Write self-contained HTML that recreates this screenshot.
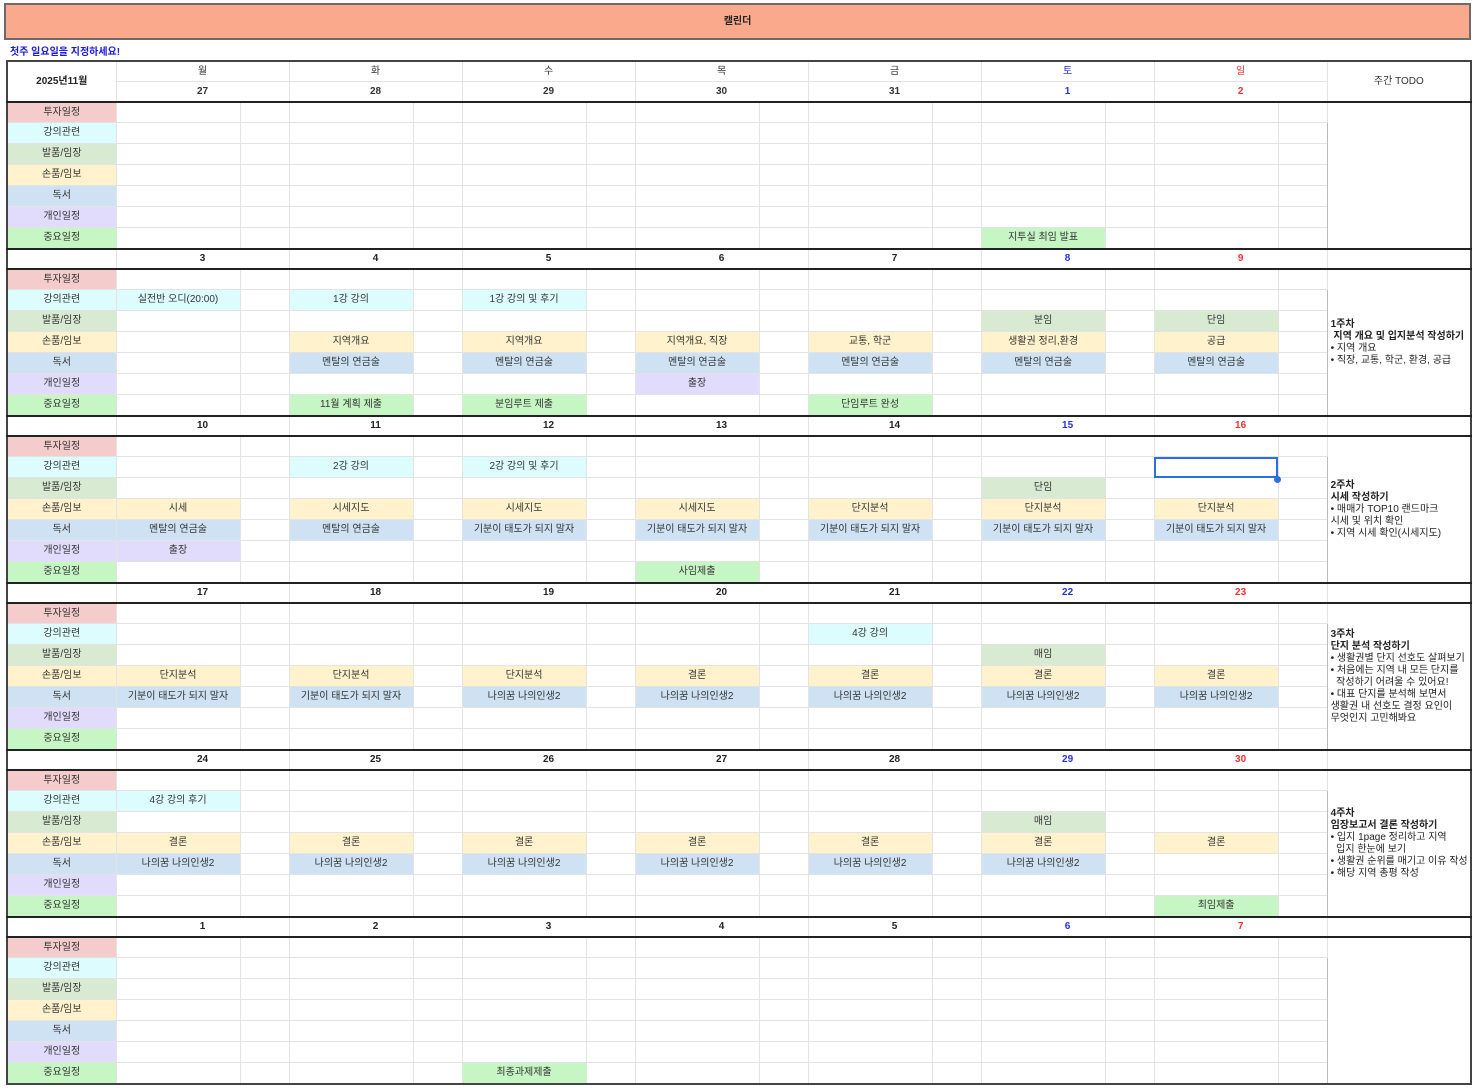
<!DOCTYPE html>
<html><head><meta charset="utf-8">
<style>
body{margin:0;background:#fff;width:1473px;height:1090px;position:relative;overflow:hidden;font-family:"Liberation Sans","Noto Sans CJK KR",sans-serif;}
.title{position:absolute;left:4px;top:3px;width:1463px;height:33px;background:#fba98c;border:2px solid #6b6b6b;font-size:10px;font-weight:bold;text-align:center;line-height:33px;color:#222}
.note{position:absolute;left:10px;top:43px;font-size:10px;font-weight:bold;color:#1a1adf}
table{position:absolute;left:6px;top:60px;border-collapse:collapse;table-layout:fixed;width:1464px;font-size:10px;color:#333;border:2px solid #444}
td{border:1px solid #e3e3e3;padding:0;text-align:center;white-space:nowrap;overflow:hidden;height:20px;line-height:12px}
tr.h td{height:19px}
tr.w td{border-top:2px solid #222;font-weight:bold;color:#222;height:18px}
tr.fr td{border-top:2px solid #222;height:19px}
td.todo{border-left:1px solid #bbb;text-align:left;vertical-align:middle;padding-left:3px;white-space:normal;font-size:10px;line-height:12px;color:#222;background:#fff}
td.todo b{font-weight:bold}
tr td.sa{color:#2233dd}tr td.su{color:#f03030}
.a{background:#f4cccc}.b{background:#dcfcfd}.c{background:#d9ead3}.d{background:#fff2cc}.e{background:#cfe2f3}.f{background:#e1dcfc}.g{background:#c6f6c4}
.sel{position:relative;outline:2px solid #2b6fe0;outline-offset:-2px}
.dot{position:absolute;left:1274px;top:476px;width:7px;height:7px;border-radius:50%;background:#2b6fe0}
</style></head><body>
<div class="title">캘린더</div>
<div class="note">첫주 일요일을 지정하세요!</div>
<table>
<colgroup><col style="width:109px"><col style="width:124px"><col style="width:49px"><col style="width:124px"><col style="width:49px"><col style="width:124px"><col style="width:49px"><col style="width:124px"><col style="width:49px"><col style="width:124px"><col style="width:49px"><col style="width:124px"><col style="width:49px"><col style="width:124px"><col style="width:49px"><col style="width:144px"></colgroup>
<tr class="h"><td rowspan="2" style="font-weight:bold;color:#222">2025년11월</td><td colspan="2">월</td><td colspan="2">화</td><td colspan="2">수</td><td colspan="2">목</td><td colspan="2">금</td><td colspan="2" class="sa">토</td><td colspan="2" class="su">일</td><td rowspan="2">주간 TODO</td></tr>
<tr class="h" style="font-weight:bold"><td colspan="2"><b>27</b></td><td colspan="2"><b>28</b></td><td colspan="2"><b>29</b></td><td colspan="2"><b>30</b></td><td colspan="2"><b>31</b></td><td colspan="2" class="sa"><b>1</b></td><td colspan="2" class="su"><b>2</b></td></tr>
<!-- week1 -->
<tr class="fr"><td class="a">투자일정</td><td></td><td></td><td></td><td></td><td></td><td></td><td></td><td></td><td></td><td></td><td></td><td></td><td></td><td></td><td class="todo" rowspan="7"></td></tr>
<tr><td class="b">강의관련</td><td></td><td></td><td></td><td></td><td></td><td></td><td></td><td></td><td></td><td></td><td></td><td></td><td></td><td></td></tr>
<tr><td class="c">발품/임장</td><td></td><td></td><td></td><td></td><td></td><td></td><td></td><td></td><td></td><td></td><td></td><td></td><td></td><td></td></tr>
<tr><td class="d">손품/임보</td><td></td><td></td><td></td><td></td><td></td><td></td><td></td><td></td><td></td><td></td><td></td><td></td><td></td><td></td></tr>
<tr><td class="e">독서</td><td></td><td></td><td></td><td></td><td></td><td></td><td></td><td></td><td></td><td></td><td></td><td></td><td></td><td></td></tr>
<tr><td class="f">개인일정</td><td></td><td></td><td></td><td></td><td></td><td></td><td></td><td></td><td></td><td></td><td></td><td></td><td></td><td></td></tr>
<tr><td class="g">중요일정</td><td></td><td></td><td></td><td></td><td></td><td></td><td></td><td></td><td></td><td></td><td class="g">지투실 최임 발표</td><td></td><td></td><td></td></tr>
<!-- week2 -->
<tr class="w"><td></td><td colspan="2">3</td><td colspan="2">4</td><td colspan="2">5</td><td colspan="2">6</td><td colspan="2">7</td><td colspan="2" class="sa">8</td><td colspan="2" class="su">9</td><td></td></tr>
<tr class="fr"><td class="a">투자일정</td><td></td><td></td><td></td><td></td><td></td><td></td><td></td><td></td><td></td><td></td><td></td><td></td><td></td><td></td><td class="todo" rowspan="7"><b>1주차<br>&nbsp;지역 개요 및 입지분석 작성하기</b><br>• 지역 개요<br>• 직장, 교통, 학군, 환경, 공급</td></tr>
<tr><td class="b">강의관련</td><td class="b">실전반 오디(20:00)</td><td></td><td class="b">1강 강의</td><td></td><td class="b">1강 강의 및 후기</td><td></td><td></td><td></td><td></td><td></td><td></td><td></td><td></td><td></td></tr>
<tr><td class="c">발품/임장</td><td></td><td></td><td></td><td></td><td></td><td></td><td></td><td></td><td></td><td></td><td class="c">분임</td><td></td><td class="c">단임</td><td></td></tr>
<tr><td class="d">손품/임보</td><td></td><td></td><td class="d">지역개요</td><td></td><td class="d">지역개요</td><td></td><td class="d">지역개요, 직장</td><td></td><td class="d">교통, 학군</td><td></td><td class="d">생활권 정리,환경</td><td></td><td class="d">공급</td><td></td></tr>
<tr><td class="e">독서</td><td></td><td></td><td class="e">멘탈의 연금술</td><td></td><td class="e">멘탈의 연금술</td><td></td><td class="e">멘탈의 연금술</td><td></td><td class="e">멘탈의 연금술</td><td></td><td class="e">멘탈의 연금술</td><td></td><td class="e">멘탈의 연금술</td><td></td></tr>
<tr><td class="f">개인일정</td><td></td><td></td><td></td><td></td><td></td><td></td><td class="f">출장</td><td></td><td></td><td></td><td></td><td></td><td></td><td></td></tr>
<tr><td class="g">중요일정</td><td></td><td></td><td class="g">11월 계획 제출</td><td></td><td class="g">분임루트 제출</td><td></td><td></td><td></td><td class="g">단임루트 완성</td><td></td><td></td><td></td><td></td><td></td></tr>
<!-- week3 -->
<tr class="w"><td></td><td colspan="2">10</td><td colspan="2">11</td><td colspan="2">12</td><td colspan="2">13</td><td colspan="2">14</td><td colspan="2" class="sa">15</td><td colspan="2" class="su">16</td><td></td></tr>
<tr class="fr"><td class="a">투자일정</td><td></td><td></td><td></td><td></td><td></td><td></td><td></td><td></td><td></td><td></td><td></td><td></td><td></td><td></td><td class="todo" rowspan="7"><b>2주차<br>시세 작성하기</b><br>• 매매가 TOP10 랜드마크<br>시세 및 위치 확인<br>• 지역 시세 확인(시세지도)</td></tr>
<tr><td class="b">강의관련</td><td></td><td></td><td class="b">2강 강의</td><td></td><td class="b">2강 강의 및 후기</td><td></td><td></td><td></td><td></td><td></td><td></td><td></td><td class="sel"></td><td></td></tr>
<tr><td class="c">발품/임장</td><td></td><td></td><td></td><td></td><td></td><td></td><td></td><td></td><td></td><td></td><td class="c">단임</td><td></td><td></td><td></td></tr>
<tr><td class="d">손품/임보</td><td class="d">시세</td><td></td><td class="d">시세지도</td><td></td><td class="d">시세지도</td><td></td><td class="d">시세지도</td><td></td><td class="d">단지분석</td><td></td><td class="d">단지분석</td><td></td><td class="d">단지분석</td><td></td></tr>
<tr><td class="e">독서</td><td class="e">멘탈의 연금술</td><td></td><td class="e">멘탈의 연금술</td><td></td><td class="e">기분이 태도가 되지 말자</td><td></td><td class="e">기분이 태도가 되지 말자</td><td></td><td class="e">기분이 태도가 되지 말자</td><td></td><td class="e">기분이 태도가 되지 말자</td><td></td><td class="e">기분이 태도가 되지 말자</td><td></td></tr>
<tr><td class="f">개인일정</td><td class="f">출장</td><td></td><td></td><td></td><td></td><td></td><td></td><td></td><td></td><td></td><td></td><td></td><td></td><td></td></tr>
<tr><td class="g">중요일정</td><td></td><td></td><td></td><td></td><td></td><td></td><td class="g">사임제출</td><td></td><td></td><td></td><td></td><td></td><td></td><td></td></tr>
<!-- week4 -->
<tr class="w"><td></td><td colspan="2">17</td><td colspan="2">18</td><td colspan="2">19</td><td colspan="2">20</td><td colspan="2">21</td><td colspan="2" class="sa">22</td><td colspan="2" class="su">23</td><td></td></tr>
<tr class="fr"><td class="a">투자일정</td><td></td><td></td><td></td><td></td><td></td><td></td><td></td><td></td><td></td><td></td><td></td><td></td><td></td><td></td><td class="todo" rowspan="7"><b>3주차<br>단지 분석 작성하기</b><br>• 생활권별 단지 선호도 살펴보기<br>• 처음에는 지역 내 모든 단지를<br>&nbsp; 작성하기 어려울 수 있어요!<br>• 대표 단지를 분석해 보면서<br>생활권 내 선호도 결정 요인이<br>무엇인지 고민해봐요</td></tr>
<tr><td class="b">강의관련</td><td></td><td></td><td></td><td></td><td></td><td></td><td></td><td></td><td class="b">4강 강의</td><td></td><td></td><td></td><td></td><td></td></tr>
<tr><td class="c">발품/임장</td><td></td><td></td><td></td><td></td><td></td><td></td><td></td><td></td><td></td><td></td><td class="c">매임</td><td></td><td></td><td></td></tr>
<tr><td class="d">손품/임보</td><td class="d">단지분석</td><td></td><td class="d">단지분석</td><td></td><td class="d">단지분석</td><td></td><td class="d">결론</td><td></td><td class="d">결론</td><td></td><td class="d">결론</td><td></td><td class="d">결론</td><td></td></tr>
<tr><td class="e">독서</td><td class="e">기분이 태도가 되지 말자</td><td></td><td class="e">기분이 태도가 되지 말자</td><td></td><td class="e">나의꿈 나의인생2</td><td></td><td class="e">나의꿈 나의인생2</td><td></td><td class="e">나의꿈 나의인생2</td><td></td><td class="e">나의꿈 나의인생2</td><td></td><td class="e">나의꿈 나의인생2</td><td></td></tr>
<tr><td class="f">개인일정</td><td></td><td></td><td></td><td></td><td></td><td></td><td></td><td></td><td></td><td></td><td></td><td></td><td></td><td></td></tr>
<tr><td class="g">중요일정</td><td></td><td></td><td></td><td></td><td></td><td></td><td></td><td></td><td></td><td></td><td></td><td></td><td></td><td></td></tr>
<!-- week5 -->
<tr class="w"><td></td><td colspan="2">24</td><td colspan="2">25</td><td colspan="2">26</td><td colspan="2">27</td><td colspan="2">28</td><td colspan="2" class="sa">29</td><td colspan="2" class="su">30</td><td></td></tr>
<tr class="fr"><td class="a">투자일정</td><td></td><td></td><td></td><td></td><td></td><td></td><td></td><td></td><td></td><td></td><td></td><td></td><td></td><td></td><td class="todo" rowspan="7"><b>4주차<br>임장보고서 결론 작성하기</b><br>• 입지 1page 정리하고 지역<br>&nbsp; 입지 한눈에 보기<br>• 생활권 순위를 매기고 이유 작성<br>• 해당 지역 총평 작성</td></tr>
<tr><td class="b">강의관련</td><td class="b">4강 강의 후기</td><td></td><td></td><td></td><td></td><td></td><td></td><td></td><td></td><td></td><td></td><td></td><td></td><td></td></tr>
<tr><td class="c">발품/임장</td><td></td><td></td><td></td><td></td><td></td><td></td><td></td><td></td><td></td><td></td><td class="c">매임</td><td></td><td></td><td></td></tr>
<tr><td class="d">손품/임보</td><td class="d">결론</td><td></td><td class="d">결론</td><td></td><td class="d">결론</td><td></td><td class="d">결론</td><td></td><td class="d">결론</td><td></td><td class="d">결론</td><td></td><td class="d">결론</td><td></td></tr>
<tr><td class="e">독서</td><td class="e">나의꿈 나의인생2</td><td></td><td class="e">나의꿈 나의인생2</td><td></td><td class="e">나의꿈 나의인생2</td><td></td><td class="e">나의꿈 나의인생2</td><td></td><td class="e">나의꿈 나의인생2</td><td></td><td class="e">나의꿈 나의인생2</td><td></td><td></td><td></td></tr>
<tr><td class="f">개인일정</td><td></td><td></td><td></td><td></td><td></td><td></td><td></td><td></td><td></td><td></td><td></td><td></td><td></td><td></td></tr>
<tr><td class="g">중요일정</td><td></td><td></td><td></td><td></td><td></td><td></td><td></td><td></td><td></td><td></td><td></td><td></td><td class="g">최임제출</td><td></td></tr>
<!-- week6 -->
<tr class="w"><td></td><td colspan="2">1</td><td colspan="2">2</td><td colspan="2">3</td><td colspan="2">4</td><td colspan="2">5</td><td colspan="2" class="sa">6</td><td colspan="2" class="su">7</td><td></td></tr>
<tr class="fr"><td class="a">투자일정</td><td></td><td></td><td></td><td></td><td></td><td></td><td></td><td></td><td></td><td></td><td></td><td></td><td></td><td></td><td class="todo" rowspan="7"></td></tr>
<tr><td class="b">강의관련</td><td></td><td></td><td></td><td></td><td></td><td></td><td></td><td></td><td></td><td></td><td></td><td></td><td></td><td></td></tr>
<tr><td class="c">발품/임장</td><td></td><td></td><td></td><td></td><td></td><td></td><td></td><td></td><td></td><td></td><td></td><td></td><td></td><td></td></tr>
<tr><td class="d">손품/임보</td><td></td><td></td><td></td><td></td><td></td><td></td><td></td><td></td><td></td><td></td><td></td><td></td><td></td><td></td></tr>
<tr><td class="e">독서</td><td></td><td></td><td></td><td></td><td></td><td></td><td></td><td></td><td></td><td></td><td></td><td></td><td></td><td></td></tr>
<tr><td class="f">개인일정</td><td></td><td></td><td></td><td></td><td></td><td></td><td></td><td></td><td></td><td></td><td></td><td></td><td></td><td></td></tr>
<tr><td class="g">중요일정</td><td></td><td></td><td></td><td></td><td class="g">최종과제제출</td><td></td><td></td><td></td><td></td><td></td><td></td><td></td><td></td><td></td></tr>
</table>
<div class="dot"></div>
</body></html>
